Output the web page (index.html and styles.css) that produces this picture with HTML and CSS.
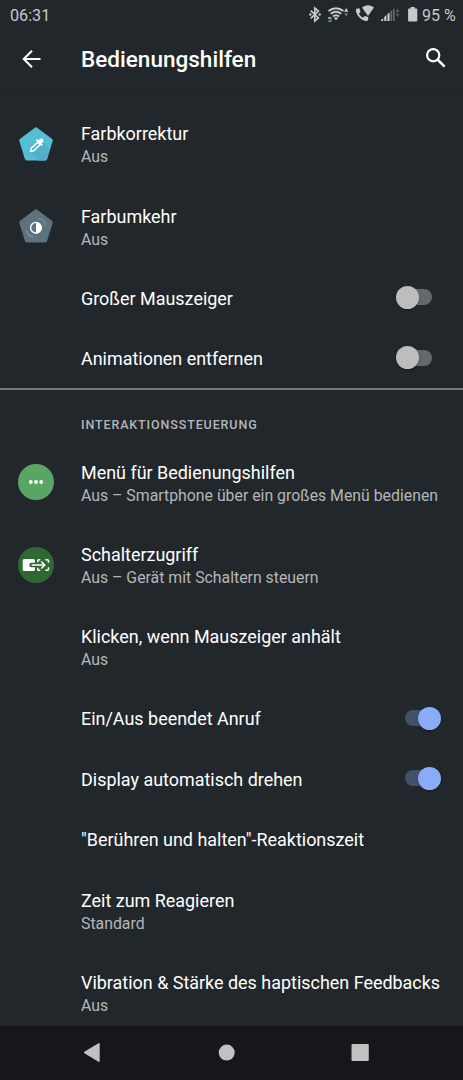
FILE: index.html
```html
<!DOCTYPE html>
<html lang="de">
<head>
    <meta charset="UTF-8">
    <title>Bedienungshilfen</title>
    <link rel="stylesheet" href="styles.css">
</head>
<body>

<div class="screen">
    <header class="status-bar">
        <span class="clock">06:31</span>
        <svg class="status-icons" width="120" height="30" viewBox="300 0 120 30">
            <!-- bluetooth -->
            <path d="M310.800 10.600l7.600 7.400-3.600 3V8l3.600 3-7.600 7.400" fill="none" stroke="#c8c9ca" stroke-width="1.700"/>
            <circle cx="310.300" cy="14.500" r="1.200" fill="#c8c9ca"/>
            <circle cx="319.700" cy="14.500" r="1.200" fill="#c8c9ca"/>
            <!-- wifi -->
            <g fill="none" stroke="#c8c9ca" stroke-width="2">
                <path d="M328.500 11q7.500-5.500 15 0"/>
                <path d="M330.700 13.800q5.300-4 10.600 0"/>
                <path d="M332.900 16.600q3.100-2.600 6.200 0"/>
            </g>
            <path d="M333.800 18q2.200-1.500 4.400 0L336 20.300z" fill="#c8c9ca"/>
            <text class="wifi-band" x="327.500" y="21.500">5</text>
            <path d="M344 11.700l2.200-3.700 2.200 3.700z" fill="#c8c9ca"/>
            <path d="M344 13.300h4.400l-2.200 3.200z" fill="#74777a"/>
            <!-- wifi calling -->
            <path d="M362 7.500q6-4.300 12 0L368 16z" fill="#c8c9ca"/>
            <path d="M356.300 8.700l3.200-.4 1 3.600-1.600 1.800q1.400 2.600 4 4l1.800-1.600 3.600 1-.2 3.400q-1.500.8-3.300.3-6.700-2.300-8.700-8.800-.4-1.800.2-3.300z" fill="#c8c9ca"/>
            <!-- mobile signal -->
            <path d="M381 21v-1l2.200-1.800V21zM384.200 21v-4l2.200-1.900V21zM387.400 21v-6.700l2.200-2V21z" fill="#c8c9ca"/>
            <path d="M390.600 21v-9.700l1.600-1.300v11zM393 21V9.400l1.600-1.400v13z" fill="#686b6e"/>
            <path d="M395.500 12l2-3.700 2 3.700zM395.500 13.500h4l-2 3.500z" fill="#595d60"/>
            <!-- battery -->
            <path d="M410.700 7h4v1.500h1.700q.9 0 .9.900v11.200q0 .9-.9.900H409q-.9 0-.9-.9V9.400q0-.9.900-.9h1.700z" fill="#c8c9ca"/>
        </svg>
        <span class="battery">95 %</span>
    </header>

    <div class="app-bar">
        <svg class="back" width="24" height="24" viewBox="0 0 24 24">
            <path d="M21.500 12H4.700M13 3.700L4.700 12l8.300 8.300" fill="none" stroke="#fff" stroke-width="2"/>
        </svg>
        <h1>Bedienungshilfen</h1>
        <svg class="search" width="24" height="24" viewBox="0 0 24 24">
            <circle cx="9.200" cy="8.200" r="6.100" fill="none" stroke="#fff" stroke-width="2.200"/>
            <path d="M13.500 12.500l7.100 7.100" stroke="#fff" stroke-width="2.500"/>
        </svg>
    </div>

    <main class="settings">
        <div class="row tall">
            <svg class="icon" width="36" height="36" viewBox="0 0 36 36">
                <path d="M16.500 1.900q1.500-1.200 3 0l14.400 10.900q1.200.9.800 2.300l-5.600 17.900q-.5 1.600-2.100 1.600H9q-1.600 0-2.100-1.600L1.300 15.100q-.4-1.400.8-2.300z" fill="#56bdd6"/>
                <path d="M12 25l11-11 8.500 9.500L29 33q-.5 1.600-2 1.600h-7z" fill="#50b1c9"/>
                <path d="M19.800 16.200l2.300 2.300-6.300 6.300-3.200.6.600-2.900z" fill="none" stroke="#fff" stroke-width="1.500"/>
                <path d="M18.600 13.700l5.700 5.700M21.500 16.500l2.400-2.400" stroke="#fff" stroke-width="2"/>
                <circle cx="23.300" cy="14.800" r="2.200" fill="#fff"/>
            </svg>
            <div class="label"><div class="title">Farbkorrektur</div><div class="summary">Aus</div></div>
        </div>
        <div class="row tall">
            <svg class="icon" width="36" height="36" viewBox="0 0 36 36">
                <path d="M16.500 1.900q1.500-1.200 3 0l14.400 10.900q1.200.9.800 2.300l-5.600 17.900q-.5 1.600-2.100 1.600H9q-1.600 0-2.100-1.600L1.300 15.100q-.4-1.400.8-2.300z" fill="#5d717e"/>
                <path d="M20.500 10.500q5.800.7 7 7M8.500 22.500q1.200 5.500 7 6.500" fill="none" stroke="#84939c" stroke-width="1.200"/>
                <circle cx="18" cy="19.800" r="5.400" fill="none" stroke="#fff" stroke-width="1.400"/>
                <path d="M18 14.600a5.200 5.200 0 0 1 0 10.400z" fill="#fff"/>
            </svg>
            <div class="label"><div class="title">Farbumkehr</div><div class="summary">Aus</div></div>
        </div>
        <div class="row">
            <div class="title">Großer Mauszeiger</div>
            <span class="switch"></span>
        </div>
        <div class="row">
            <div class="title">Animationen entfernen</div>
            <span class="switch"></span>
        </div>

        <h2>Interaktionssteuerung</h2>

        <div class="row tall">
            <svg class="icon" width="36" height="36" viewBox="0 0 36 36">
                <circle cx="18" cy="18" r="18" fill="#5ba564"/>
                <g fill="#fff">
                    <circle cx="12.800" cy="18" r="1.900"/>
                    <circle cx="18" cy="18" r="1.900"/>
                    <circle cx="23.200" cy="18" r="1.900"/>
                </g>
            </svg>
            <div class="label"><div class="title">Menü für Bedienungshilfen</div><div class="summary">Aus – Smartphone über ein großes Menü bedienen</div></div>
        </div>
        <div class="row tall">
            <svg class="icon" width="36" height="36" viewBox="0 0 36 36">
                <circle cx="18" cy="18" r="18" fill="#306833"/>
                <path d="M6.200 12h9.300q1.500 0 1.500 1.500v2.300h-3.500a2.200 2.200 0 0 0 0 4.400H17v2.300q0 1.500-1.500 1.500H6.200q-1.500 0-1.500-1.500v-9q0-1.500 1.500-1.500z" fill="#fff"/>
                <path d="M13.700 18h13M23.300 14.500l3.500 3.500-3.500 3.500" fill="none" stroke="#fff" stroke-width="1.600"/>
                <path d="M19.800 15.200v-1.400q0-1.100 1.100-1.100h1.400M27.300 12.700h2q1.200 0 1.200 1.200v1.900M30.500 20.200v1.900q0 1.200-1.200 1.200h-2M22.300 23.300h-1.400q-1.100 0-1.100-1.100v-1.400" fill="none" stroke="#fff" stroke-width="1.600"/>
            </svg>
            <div class="label"><div class="title">Schalterzugriff</div><div class="summary">Aus – Gerät mit Schaltern steuern</div></div>
        </div>
        <div class="row tall">
            <div class="label"><div class="title">Klicken, wenn Mauszeiger anhält</div><div class="summary">Aus</div></div>
        </div>
        <div class="row">
            <div class="title">Ein/Aus beendet Anruf</div>
            <span class="switch on"></span>
        </div>
        <div class="row">
            <div class="title">Display automatisch drehen</div>
            <span class="switch on"></span>
        </div>
        <div class="row">
            <div class="title">"Berühren und halten"-Reaktionszeit</div>
        </div>
        <div class="row tall">
            <div class="label"><div class="title">Zeit zum Reagieren</div><div class="summary">Standard</div></div>
        </div>
        <div class="row tall">
            <div class="label"><div class="title">Vibration &amp; Stärke des haptischen Feedbacks</div><div class="summary">Aus</div></div>
        </div>
    </main>

    <nav class="nav-bar">
        <svg width="463" height="54" viewBox="0 0 463 54" fill="#c1c1c1">
            <path d="M98.500 17.300q1.200-.6 1.200.8v16.800q0 1.400-1.200.8L84.300 27.200q-1-.7 0-1.400z"/>
            <circle cx="226.700" cy="26.600" r="8"/>
            <rect x="351.500" y="18" width="17.300" height="17" rx="1"/>
        </svg>
    </nav>
</div>

</body>
</html>
```
FILE: styles.css
```css
* {
    box-sizing: border-box;
}

body {
    margin: 0;
    background: #22272b;
    color: #fff;
    font-family: Roboto, sans-serif;
}

.screen {
    display: flex;
    flex-direction: column;
    height: 1080px;
    overflow: hidden;
}

.status-bar {
    display: flex;
    flex: none;
    align-items: center;
    height: 30px;
    padding-left: 10px;
    color: #c8c9ca;
    font-size: 16px;
}

.clock {
    width: 290px;
    font-size: 16.2px;
}

.battery {
    padding-left: 2px;
    white-space: nowrap;
}

.wifi-band {
    fill: #c8c9ca;
    font-size: 7.5px;
}

.app-bar {
    display: flex;
    flex: none;
    align-items: center;
    height: 62px;
    padding: 0 15px 4px 19px;
    border-bottom: 1px solid #1e2327;
}

h1 {
    flex: 1;
    margin: 2px 0 0 38px;
    font-size: 22.55px;
    font-weight: 500;
}

.settings {
    flex: 1;
    min-height: 0;
    padding-top: 10.8px;
    overflow: hidden;
}

.row {
    display: flex;
    align-items: center;
    height: 60.4px;
    padding: 0 22px 0 81px;
    white-space: nowrap;
}

.row.tall {
    height: 82.2px;
}

.icon {
    flex: none;
    margin: 0 27px 0 -63px;
}

.title {
    padding-top: 2.8px;
    font-size: 17.95px;
    line-height: 24px;
}

.label .title {
    padding-top: 3.2px;
}

.summary {
    color: #b4b7b9;
    font-size: 15.83px;
    line-height: 22px;
}

h2 {
    height: 53.3px;
    margin: 0;
    padding: 27px 0 0 81px;
    border-top: 2px solid #74777a;
    color: #b4b7b9;
    font-size: 12.5px;
    font-weight: 500;
    line-height: 16px;
    letter-spacing: 0.88px;
    text-transform: uppercase;
}

.switch {
    display: flex;
    align-items: center;
    width: 32px;
    height: 16px;
    margin: 0 8.6px 0 auto;
    border-radius: 8px;
    background: #64686b;
}

.switch::before {
    content: "";
    flex: none;
    width: 23px;
    height: 23px;
    margin-left: -4px;
    border-radius: 50%;
    background: #bdbdbd;
    box-shadow: 0 1px 2px rgba(0, 0, 0, 0.3);
}

.switch.on {
    margin-right: 4px;
    background: #435069;
}

.switch.on::before {
    margin-left: 13px;
    background: #8aabf5;
}

.nav-bar {
    flex: none;
    height: 54px;
    background: #16171b;
}
```
